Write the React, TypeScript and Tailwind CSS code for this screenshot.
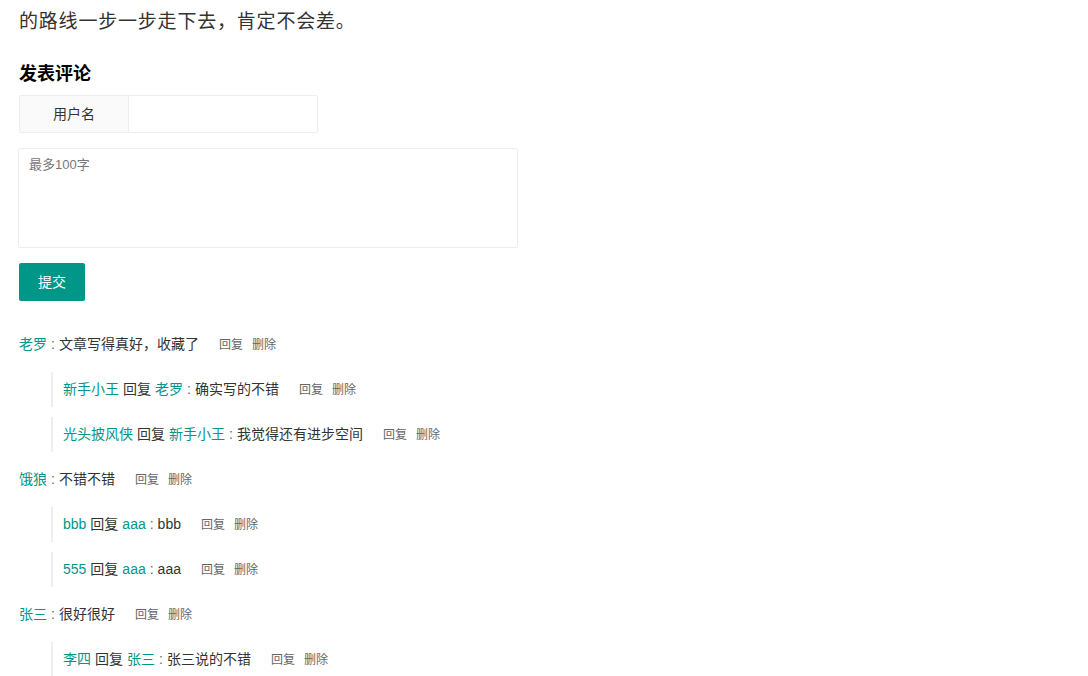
import React from 'react';

type Reply = { from: string; to: string; text: string };
type Comment = { name: string; text: string; replies: Reply[] };

const comments: Comment[] = [
  {
    name: '老罗',
    text: '文章写得真好，收藏了',
    replies: [
      { from: '新手小王', to: '老罗', text: '确实写的不错' },
      { from: '光头披风侠', to: '新手小王', text: '我觉得还有进步空间' },
    ],
  },
  {
    name: '饿狼',
    text: '不错不错',
    replies: [
      { from: 'bbb', to: 'aaa', text: 'bbb' },
      { from: '555', to: 'aaa', text: 'aaa' },
    ],
  },
  {
    name: '张三',
    text: '很好很好',
    replies: [{ from: '李四', to: '张三', text: '张三说的不错' }],
  },
];

function Actions() {
  return (
    <span className="ml-[20px] text-[12px] text-[#666]">
      <span className="cursor-pointer">回复</span>
      <span className="ml-[9px] cursor-pointer">删除</span>
    </span>
  );
}

export default function App() {
  return (
    <div
      className="min-h-screen bg-white text-[#333] px-[19px]"
      style={{ fontFamily: '"Liberation Sans", "Noto Sans CJK SC", sans-serif' }}
    >
      <p className="pt-[8px] text-[19px] leading-[28px] tracking-[0.8px]">的路线一步一步走下去，肯定不会差。</p>

      <h3 className="mt-[26px] text-[18px] font-bold leading-[24px] text-black">发表评论</h3>

      <div className="mt-[9px] flex h-[38px] w-[299px]">
        <label className="flex w-[110px] items-center justify-center rounded-l-[2px] border border-[#eee] bg-[#fafafa] text-[14px]">
          用户名
        </label>
        <input className="h-full w-[189px] rounded-r-[2px] border border-l-0 border-[#eee] px-[10px] text-[14px] outline-none" />
      </div>

      <textarea
        placeholder="最多100字"
        className="mt-[15px] -ml-px block h-[100px] w-[500px] resize-none rounded-[2px] border border-[#eee] px-[10px] py-[6px] text-[13px] leading-[20px] outline-none placeholder:text-[#777]"
      />

      <button className="mt-[15px] h-[38px] w-[66px] rounded-[2px] bg-[#009688] text-[14px] text-white">
        提交
      </button>

      <div className="mt-[26px] text-[14px]">
        {comments.map((c) => (
          <div key={c.name}>
            <div className="mb-[10px] flex h-[35px] items-center">
              <span className="text-[#009688]">{c.name}</span>
              <span className="mx-[4px] text-[#666]">:</span>
              <span>{c.text}</span>
              <Actions />
            </div>
            {c.replies.map((r, i) => (
              <div
                key={i}
                className="mb-[10px] ml-[32px] flex h-[35px] items-center border-l-2 border-[#eee] pl-[10px]"
              >
                <span className="text-[#009688]">{r.from}</span>
                <span className="mx-[4px]">回复</span>
                <span className="text-[#009688]">{r.to}</span>
                <span className="mx-[4px] text-[#666]">:</span>
                <span>{r.text}</span>
                <Actions />
              </div>
            ))}
          </div>
        ))}
      </div>
    </div>
  );
}
